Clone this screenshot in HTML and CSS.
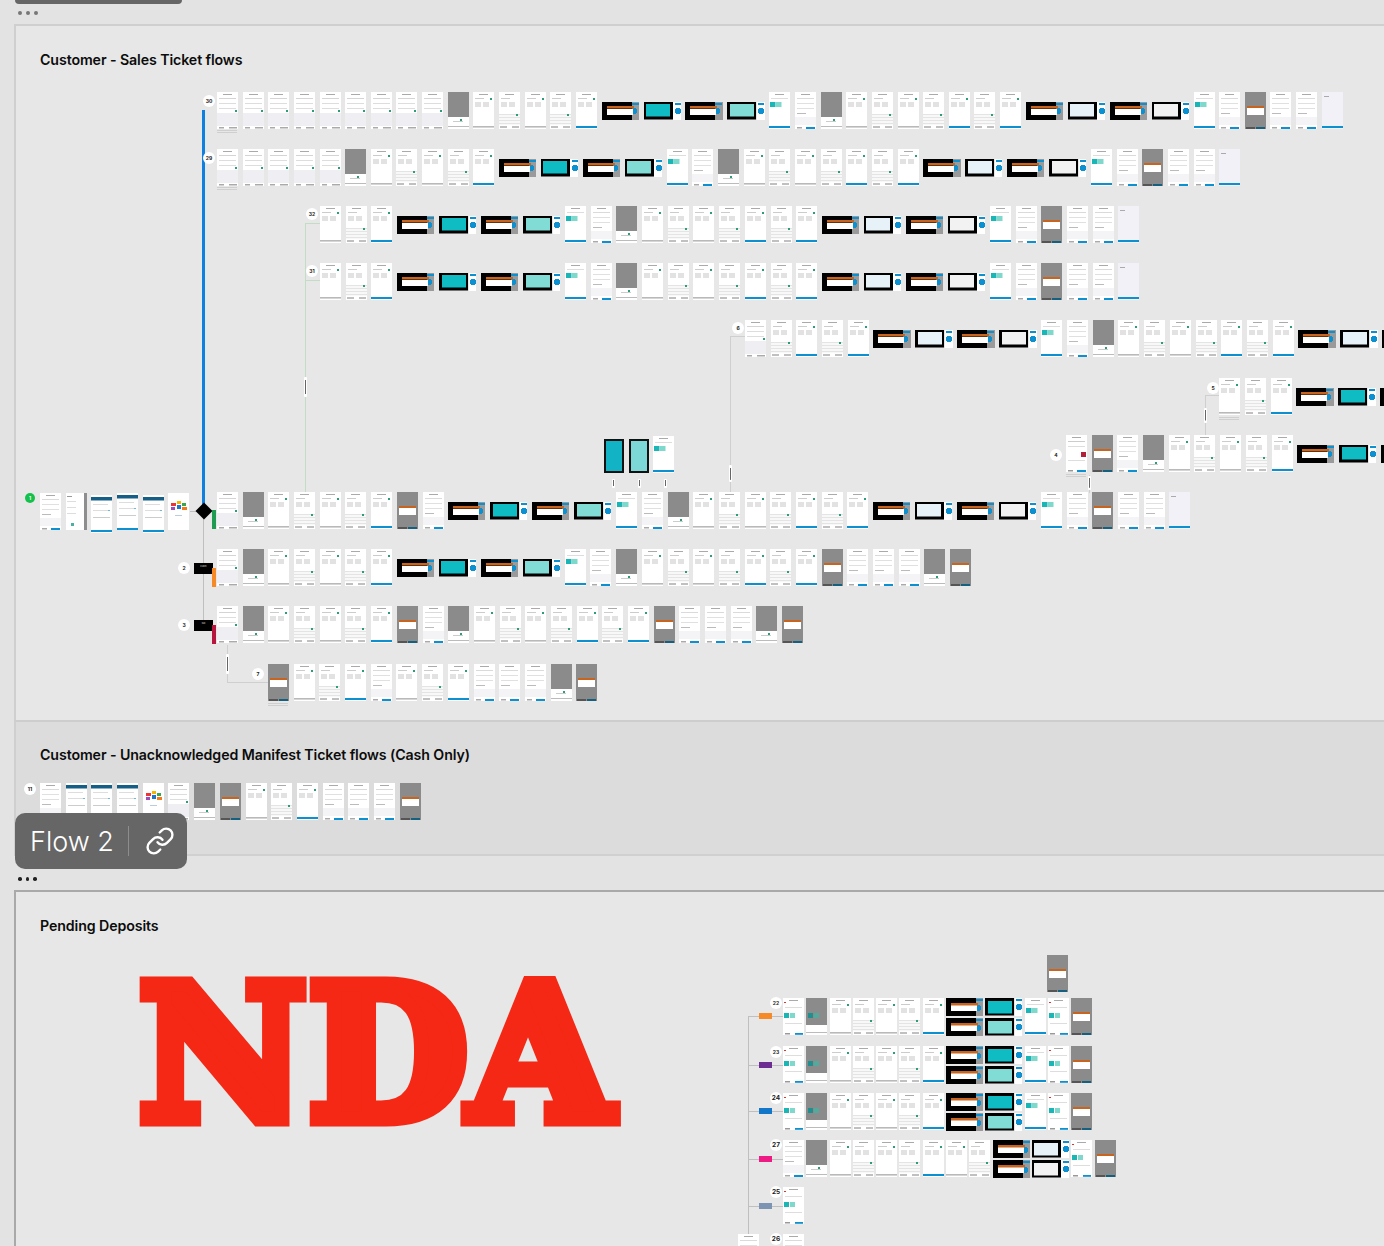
FILE: index.html
```html
<!DOCTYPE html>
<html lang="en">
<head>
<meta charset="utf-8">
<title>Flows</title>
<link rel="stylesheet" href="styles.css">
</head>
<body>
<main class="canvas" id="canvas">
  <div class="stub"></div>
  <div class="dots dots-grey"><i></i><i></i><i></i></div>
  <section class="sec sec-one"><h2>Customer - Sales Ticket flows</h2></section>
  <section class="sec sec-two"><h2>Customer - Unacknowledged Manifest Ticket flows (Cash Only)</h2></section>
  <div class="dots dots-black"><i></i><i></i><i></i></div>
  <section class="sec sec-three">
    <h2>Pending Deposits</h2>
    <div class="nda">NDA</div>
  </section>
  <div class="flowtag">
    <span class="flowname">Flow 2</span>
    <span class="flowsep"></span>
    <svg class="flowicon" viewBox="0 0 24 24" fill="none" stroke="#fff" stroke-width="1.9" stroke-linecap="round" stroke-linejoin="round"><path d="M10 13a5 5 0 0 0 7.54.54l3-3a5 5 0 0 0-7.07-7.07l-1.72 1.71"/><path d="M14 11a5 5 0 0 0-7.54-.54l-3 3a5 5 0 0 0 7.07 7.07l1.71-1.71"/></svg>
  </div>
</main>
<script src="app.js"></script>
</body>
</html>
```
FILE: styles.css
```css
* { box-sizing: border-box; }
html, body { margin: 0; padding: 0; background: #e3e3e3; }
body { font-family: Inter, "Liberation Sans", sans-serif; color: #111; }
.canvas { position: relative; width: 1384px; height: 1246px; overflow: hidden; background: #e3e3e3; }

.stub { width: 167px; height: 4px; margin-left: 15px; background: #666; border-radius: 0 0 8px 8px; }
.dots { display: flex; gap: 4px; margin-left: 18px; height: 4px; }
.dots i { width: 4px; height: 4px; border-radius: 50%; background: #777; }
.dots-grey { margin-top: 7px; }
.dots-black { margin-top: 21px; }
.dots-black i { background: #222; width: 3.5px; height: 3.5px; }

.sec { margin-left: 14px; padding-left: 24px; }
.sec h2 { margin: 0; font-size: 14.2px; line-height: 18px; font-weight: 600; letter-spacing: -0.1px; color: #0c0c0c; }
.sec-one { margin-top: 9px; height: 696px; padding-top: 25px; background: #e7e7e7; border-top: 2px solid #cfcfcf; border-left: 2px solid #cfcfcf; }
.sec-two { height: 136px; padding-top: 24px; background: #dcdcdc; border-top: 2px solid #cdcdcd; border-bottom: 2px solid #d0d0d0; border-left: 2px solid #cfcfcf; }
.sec-three { margin-top: 9px; height: 356px; padding-top: 25px; background: #e7e7e7; border-top: 2px solid #a9a9a9; border-left: 2px solid #a9a9a9; }

.nda { margin: 43px 0 0 99px; width: 483px; height: 152px; font-family: "DejaVu Serif", serif; font-weight: 700; font-size: 186px; line-height: 152px; color: #f42814; -webkit-text-stroke: 15px #f42814; letter-spacing: 2px; white-space: nowrap; transform: scaleX(0.985); transform-origin: left center; }

.flowtag { position: absolute; left: 15px; top: 813px; width: 172px; height: 56px; display: flex; align-items: center; background: #666; border-radius: 10px; z-index: 5; }
.flowname { margin-left: 15px; font-size: 27px; font-weight: 300; color: #fff; width: 83px; white-space: nowrap; }
.flowsep { width: 1px; height: 30px; margin-left: 15px; background: #8d8d8d; }
.flowicon { width: 30px; height: 30px; margin-left: 16px; }

/* canvas items */
.row { position: absolute; display: flex; gap: 4.7px; height: 37px; filter: blur(.5px); }
.row.tight { gap: 2.3px; height: 38px; }
.pt { flex: none; width: 21px; height: 37px; background-color: #fff; background-repeat: no-repeat; }
.ls { flex: none; width: 37.3px; height: 18px; align-self: center; background-repeat: no-repeat; }
.tight .ls { width: 37px; }
.stack { flex: none; display: flex; flex-direction: column; gap: 2px; }

/* white phone screens */
.f { background-image: linear-gradient(#aaa,#aaa), linear-gradient(#d4d4d4,#d4d4d4), linear-gradient(#ddd,#ddd), linear-gradient(#ddd,#ddd), linear-gradient(#2e9c7a,#2e9c7a), linear-gradient(#eeeef3,#eeeef3), linear-gradient(#aaa,#aaa), linear-gradient(#aaa,#aaa);
  background-size: 9px 1px, 17px 1px, 17px 1px, 17px 1px, 2px 2px, 21px 13px, 5px 1.5px, 8px 1.5px;
  background-position: 6px 1.5px, 2px 6px, 2px 11px, 2px 16px, 18px 18px, 0 21px, 2px 35px, 12px 35px; }
.w, .a, .k { background-image: linear-gradient(#aaa,#aaa), linear-gradient(#ccc,#ccc), linear-gradient(#e2e2e2,#e2e2e2), linear-gradient(#e2e2e2,#e2e2e2), linear-gradient(#2e9c7a,#2e9c7a), linear-gradient(#b9b9b9,#b9b9b9);
  background-size: 9px 1px, 9px 1px, 6px 5px, 6px 5px, 2px 2px, 21px 1.6px;
  background-position: 6px 1.5px, 2px 5.5px, 2px 10px, 10px 10px, 17px 6px, 0 34px; }
.a { background-image: linear-gradient(#aaa,#aaa), linear-gradient(#ccc,#ccc), linear-gradient(#e2e2e2,#e2e2e2), linear-gradient(#e2e2e2,#e2e2e2), linear-gradient(#2e9c7a,#2e9c7a), linear-gradient(#0c90cf,#0c90cf); background-size: 9px 1px, 9px 1px, 6px 5px, 6px 5px, 2px 2px, 21px 2.4px; background-position: 6px 1.5px, 2px 5.5px, 2px 10px, 10px 10px, 17px 6px, 0 33.6px; }
.k { background-image: linear-gradient(#aaa,#aaa), linear-gradient(#ccc,#ccc), linear-gradient(#e2e2e2,#e2e2e2), linear-gradient(#e2e2e2,#e2e2e2), linear-gradient(#2e9c7a,#2e9c7a), repeating-linear-gradient(#e4e4e4 0 1px, #f8f8f8 1px 3px), linear-gradient(#c0c0c0,#c0c0c0), linear-gradient(#c0c0c0,#c0c0c0);
  background-size: 9px 1px, 9px 1px, 6px 5px, 6px 5px, 2px 2px, 21px 11px, 7px 2px, 7px 2px;
  background-position: 6px 1.5px, 2px 5.5px, 2px 10px, 10px 10px, 17px 22px, 0 22px, 1px 34px, 13px 34px; }
.q { background-image: linear-gradient(#aaa,#aaa), linear-gradient(#1ab5b5,#1ab5b5), linear-gradient(#7fd8cc,#7fd8cc), linear-gradient(#ddd,#ddd), linear-gradient(#0c90cf,#0c90cf);
  background-size: 9px 1px, 5.5px 5px, 5.5px 5px, 17px 1px, 21px 2.4px;
  background-position: 6px 1.5px, 1px 10px, 7px 10px, 2px 6px, 0 33.6px; }
.s { background-image: linear-gradient(#aaa,#aaa), linear-gradient(#d33,#d33), linear-gradient(#1ab5b5,#1ab5b5), linear-gradient(#7fd8cc,#7fd8cc), linear-gradient(#ddd,#ddd), linear-gradient(#ddd,#ddd), linear-gradient(#999,#999), linear-gradient(#0c90cf,#0c90cf);
  background-size: 9px 1px, 2px 1px, 5px 5px, 5px 5px, 17px 1px, 17px 1px, 5px 1.5px, 8px 1.8px;
  background-position: 6px 1.5px, 1px 4px, 1px 15px, 7px 15px, 2px 9px, 2px 25px, 2px 35px, 12px 35px; }
.r { background-image: linear-gradient(#aaa,#aaa), linear-gradient(#dadada,#dadada), linear-gradient(#e0e0e0,#e0e0e0), linear-gradient(#e0e0e0,#e0e0e0), linear-gradient(#bbb,#bbb), linear-gradient(#f4f4f7,#f4f4f7), linear-gradient(#aaa,#aaa), linear-gradient(#0c90cf,#0c90cf);
  background-size: 9px 1px, 17px 1px, 17px 1px, 17px 1px, 9px 1px, 21px 8px, 5px 1.5px, 9px 2.2px;
  background-position: 6px 1.5px, 2px 6px, 2px 11px, 2px 16px, 2px 21px, 0 25px, 2px 35px, 11px 34.8px; }
.m { background-image: linear-gradient(#b02038,#b02038), linear-gradient(#aaa,#aaa), linear-gradient(#ccc,#ccc), linear-gradient(#ddd,#ddd), linear-gradient(#ddd,#ddd), linear-gradient(#999,#999), linear-gradient(#0c90cf,#0c90cf);
  background-size: 5px 5px, 9px 1px, 17px 1px, 17px 1px, 17px 1px, 5px 1.5px, 9px 2.2px;
  background-position: 15px 17px, 6px 1.5px, 2px 6px, 2px 11px, 2px 25px, 2px 35px, 11px 34.8px; }
.e { background-color: #f1f1f7; background-image: linear-gradient(#aaa,#aaa), linear-gradient(#0c90cf,#0c90cf); background-size: 5px 1px, 21px 2.2px; background-position: 2px 4px, 0 34px; }
.i { background-image: linear-gradient(#999,#999), linear-gradient(#ddd,#ddd), linear-gradient(#ddd,#ddd), linear-gradient(#ddd,#ddd), linear-gradient(#4cb0a0,#4cb0a0), linear-gradient(#8e8e8e,#8e8e8e);
  background-size: 5px 1px, 9px 1px, 9px 1px, 9px 1px, 3px 3px, 3px 37px;
  background-position: 1px 3px, 1px 8px, 1px 14px, 1px 20px, 5px 30px, 18px 0; }
.h { background-image: linear-gradient(#155f86,#155f86), linear-gradient(#ddd,#ddd), linear-gradient(#ddd,#ddd), linear-gradient(#6db7d8,#6db7d8), linear-gradient(#ccc,#ccc), linear-gradient(#0c90cf,#0c90cf);
  background-size: 21px 3.5px, 15px 1px, 15px 1px, 3px 1px, 17px 1px, 21px 2.2px;
  background-position: 0 2px, 2px 9px, 2px 15px, 16px 15px, 2px 22px, 0 34.8px; }
.h2 { height: 38px; margin-top: 2px; }
.n { background-image: linear-gradient(#e33,#e33), linear-gradient(#f5b400,#f5b400), linear-gradient(#37a64f,#37a64f), linear-gradient(#1f76c9,#1f76c9), linear-gradient(#a24ab8,#a24ab8), linear-gradient(#f27a1a,#f27a1a), linear-gradient(#bcd,#bcd);
  background-size: 5px 3px, 4px 3px, 4px 3px, 4px 4px, 4px 3px, 5px 3px, 7px 1px;
  background-position: 3px 10px, 9px 8px, 14px 10px, 9px 12px, 3px 14px, 14px 14px, 7px 22px; }
.g { background-color: #fff; background-image: linear-gradient(#ccc,#ccc), linear-gradient(#2e9c7a,#2e9c7a), linear-gradient(#bbb,#bbb), linear-gradient(#8b8b8b,#8b8b8b);
  background-size: 10px 1px, 2px 2px, 21px 1px, 21px 25px;
  background-position: 5px 29px, 12px 26.5px, 0 34px, 0 0; }
.j { background-color: #fff; background-image: linear-gradient(#1f8f8f,#1f8f8f), linear-gradient(#56a89c,#56a89c), linear-gradient(#bbb,#bbb), linear-gradient(#8b8b8b,#8b8b8b);
  background-size: 5px 5px, 5px 5px, 21px 1px, 21px 27px;
  background-position: 2px 15px, 8px 15px, 0 34px, 0 0; }
.o { background-image: linear-gradient(#c9641f,#c9641f), linear-gradient(#fff,#fff), linear-gradient(#555,#555), linear-gradient(#15607f,#15607f);
  background-size: 17px 2px, 17px 7px, 9px 2px, 9px 2px;
  background-position: 2px 14px, 2px 16px, 1px 35px, 11px 35px;
  background-color: #8b8b8b; }
.p1, .p2 { width: 20px; height: 34px; margin-top: 3px; border: 2.5px solid #111; }
.p1 { background-color: #12b3c4; }
.p2 { background-color: #7bd8d6; }

/* landscape screens */
.b { background-image: linear-gradient(#c9641f,#c9641f), linear-gradient(#fff,#fff), radial-gradient(circle 3px at 3px 3px,#0c90cf 98%,transparent), linear-gradient(#0c90cf,#0c90cf), linear-gradient(#000,#000), linear-gradient(#9a9a9a,#9a9a9a);
  background-size: 27px 2.5px, 26px 6px, 6px 6px, 7px 2px, 30px 18px, 8px 18px;
  background-position: 5px 4.5px, 5px 7px, 29px 6.5px, 30px 1px, 0 0, 29.3px 0; }
.t, .l, .x, .y { background-image: linear-gradient(#0c90cf,#0c90cf), radial-gradient(circle 3px at 3px 3px,#0c90cf 98%,transparent), linear-gradient(#fff,#fff), linear-gradient(var(--scr),var(--scr)), linear-gradient(#000,#000);
  background-size: 6px 2px, 6px 6px, 8px 18px, 24px 12.5px, 29px 17.5px;
  background-position: 31px 1px, 31px 6px, 29.5px 0, 2.5px 2.7px, 0 .2px; }
.t { --scr: #10bcc4; }
.l { --scr: #80dcd4; }
.x { --scr: #e6f2f8; }
.y { --scr: #f2f2f2; }

/* connectors, labels */
.ln { position: absolute; background: #bfbfbf; }
.ln.blue { background: #0f7fe0; }
.ln.green { background: #c3dcc6; }
.ln.soft { background: #cfcfcf; }
.pill { position: absolute; width: 3px; background: #fff; border-radius: 1px; background-image: linear-gradient(#666,#666); background-size: 1px 70%; background-repeat: no-repeat; background-position: center; }
.num { position: absolute; width: 12px; height: 12px; border-radius: 50%; background: #fff; font-size: 5px; line-height: 12px; font-weight: 700; text-align: center; color: #222; }
.num.big { font-size: 6.5px; }
.num.go { background: #14c14a; color: #fff; width: 10px; height: 10px; line-height: 10px; }
.chip { position: absolute; }
.black { background: #000; color: #ddd; font-size: 2.6px; line-height: 3.4px; text-align: center; padding-top: 2px; }
.diamond { position: absolute; width: 12px; height: 12px; background: #000; transform: rotate(45deg); }
.orange { background: #f58a26; }
.green { background: #1f9c52; }
.crim { background: #b7163f; }
.purple { background: #6d2c91; }
.bluec { background: #1277c9; }
.pink { background: #ee1b85; }
.slate { background: #7c93b3; }
.cap { position: absolute; height: 3px; background: repeating-linear-gradient(#cfcfcf 0 1px, transparent 1px 2px); }
```
FILE: app.js
```js
const canvas = document.getElementById('canvas');
const W = 'wkwka', X = 'wkwkaka';

function put(el, x, y, w, h) {
  el.style.left = x + 'px';
  el.style.top = y + 'px';
  if (w != null) el.style.width = w + 'px';
  if (h != null) el.style.height = h + 'px';
  canvas.appendChild(el);
  return el;
}
function cell(kind) {
  const d = document.createElement('div');
  const wide = 'btlxy'.includes(kind);
  d.className = (wide ? 'ls ' : 'pt ') + ({ H: 'h h2', P: 'p1', Q: 'p2' }[kind] || kind);
  return d;
}
function row(x, y, seq, tight, gap) {
  const r = document.createElement('div');
  r.className = tight ? 'row tight' : 'row';
  if (gap) r.style.gap = gap + 'px';
  for (let i = 0; i < seq.length; i++) {
    if (seq[i] === '[') {
      const s = document.createElement('div');
      s.className = 'stack';
      s.appendChild(cell(seq[i + 1]));
      s.appendChild(cell(seq[i + 2]));
      r.appendChild(s);
      i += 3;
    } else {
      r.appendChild(cell(seq[i]));
    }
  }
  put(r, x, y);
}
function box(cls, x, y, w, h, text) {
  const d = document.createElement('div');
  d.className = cls;
  if (text) d.textContent = text;
  put(d, x, y, w, h);
}
function num(text, cx, cy, extra) {
  const d = document.createElement('div');
  d.className = 'num ' + (extra || '');
  d.textContent = text;
  put(d, cx - 6, cy - 6);
  if (extra === 'go') { d.style.left = cx - 5 + 'px'; d.style.top = cy - 5 + 'px'; }
}

/* connectors go under the screens */
box('ln blue', 202, 110, 2.5, 396);
box('ln', 203, 516, 1, 110);
box('ln', 190, 511, 8, 1);
box('ln green', 304.5, 223, 1, 269);
box('ln green', 304.5, 223, 15, 1);
box('ln green', 304.5, 280, 15, 1);
box('ln soft', 729.5, 336, 1, 156);
box('ln soft', 729.5, 336, 15, 1);
box('ln soft', 1205, 395, 1, 40);
box('ln soft', 1205, 395, 14, 1);
box('ln soft', 1089, 475, 1, 18);
box('ln soft', 227, 645, 1, 37);
box('ln soft', 227, 682, 41, 1);
box('ln', 747.5, 1016, 1, 218);
[1016, 1065, 1111, 1159, 1206].forEach(y => {
  box('ln', 748, y, 11, 1);
  box('ln', 772, y, 11, 1);
});
[[613, 479, 9], [639, 479, 9], [665, 479, 9], [305, 377, 20], [730, 465, 17], [1205, 408, 15], [1089, 476, 14], [227, 654, 20]]
  .forEach(([x, y, h]) => box('pill', x - 1.5, y, 3, h));

/* Customer - Sales Ticket flows */
row(217, 92, 'fffffffff' + 'g' + W + 'btbl' + 'qrg' + X + 'bxby' + 'qrorre', false, 4.65);
row(217, 149, 'fffff' + 'g' + W + 'btbl' + 'qrg' + X + 'bxby' + 'qrorre', false, 4.65);
row(320, 206, 'wka' + 'btbl' + 'qrg' + X + 'bxby' + 'qrorre');
row(320, 263, 'wka' + 'btbl' + 'qrg' + X + 'bxby' + 'qrorre');
row(745, 320, 'fkaka' + 'bxby' + 'qrg' + X + 'bxb');
row(1219.3, 378, 'wka' + 'btb');
row(1066, 435, 'mor' + 'g' + 'wkwk' + 'a' + 'btb');
row(40, 493, 'riHhHn');
row(217, 492, 'fg' + W + 'or' + 'btbl' + 'qrg' + X + 'bxby' + 'qrorre');
row(217, 549, 'fg' + W + 'btbl' + 'qrg' + X + 'orrrgo');
row(217, 606, 'fg' + W + 'orgwkwkakaorrrgo');
row(268, 664, 'owkarwkarrrgo');
row(604, 436, 'PQq');

box('chip black', 194, 563, 19, 11, 'Cash');
box('chip black', 194, 620, 19, 11, 'No');
box('diamond', 197.5, 505);
box('chip green', 212, 510, 4, 19);
box('chip orange', 212, 568, 4, 19);
box('chip crim', 212, 625, 4, 19);

num('30', 209, 101);
num('29', 209, 158);
num('32', 312, 214);
num('31', 312, 271);
num('6', 738, 328);
num('5', 1213, 388);
num('4', 1056, 455);
num('1', 30, 498, 'go');
num('2', 184, 568);
num('3', 184, 625);
num('7', 258, 674);

box('cap', 217, 130, 20);
box('cap', 217, 187, 20);
box('cap', 1219, 417, 20);
box('cap', 1066, 474, 20);
box('cap', 268, 703, 20);

/* Manifest */
row(40, 783, 'rhhhnfgowkarrro');
num('11', 30, 789);

/* Pending Deposits */
const dbl = 'sjwkwka[bb][tl]qso';
row(783, 998, dbl, true);
row(783, 1046, dbl, true);
row(783, 1093, dbl, true);
row(783, 1140, 'rgwkwkawk[bb][xy]so', true);
row(783, 1187, 's', true);
row(783, 1234, 'r', true);
row(738, 1234, 'r', true);
row(1047, 955, 'o', true);

box('chip orange', 759, 1013, 13, 6);
box('chip purple', 759, 1062, 13, 6);
box('chip bluec', 759, 1108, 13, 6);
box('chip pink', 759, 1156, 13, 6);
box('chip slate', 759, 1203, 13, 6);

num('22', 776, 1003);
num('23', 776, 1052);
num('24', 776, 1098, 'big');
num('27', 776, 1145, 'big');
num('25', 776, 1192, 'big');
num('26', 776, 1239, 'big');
```
